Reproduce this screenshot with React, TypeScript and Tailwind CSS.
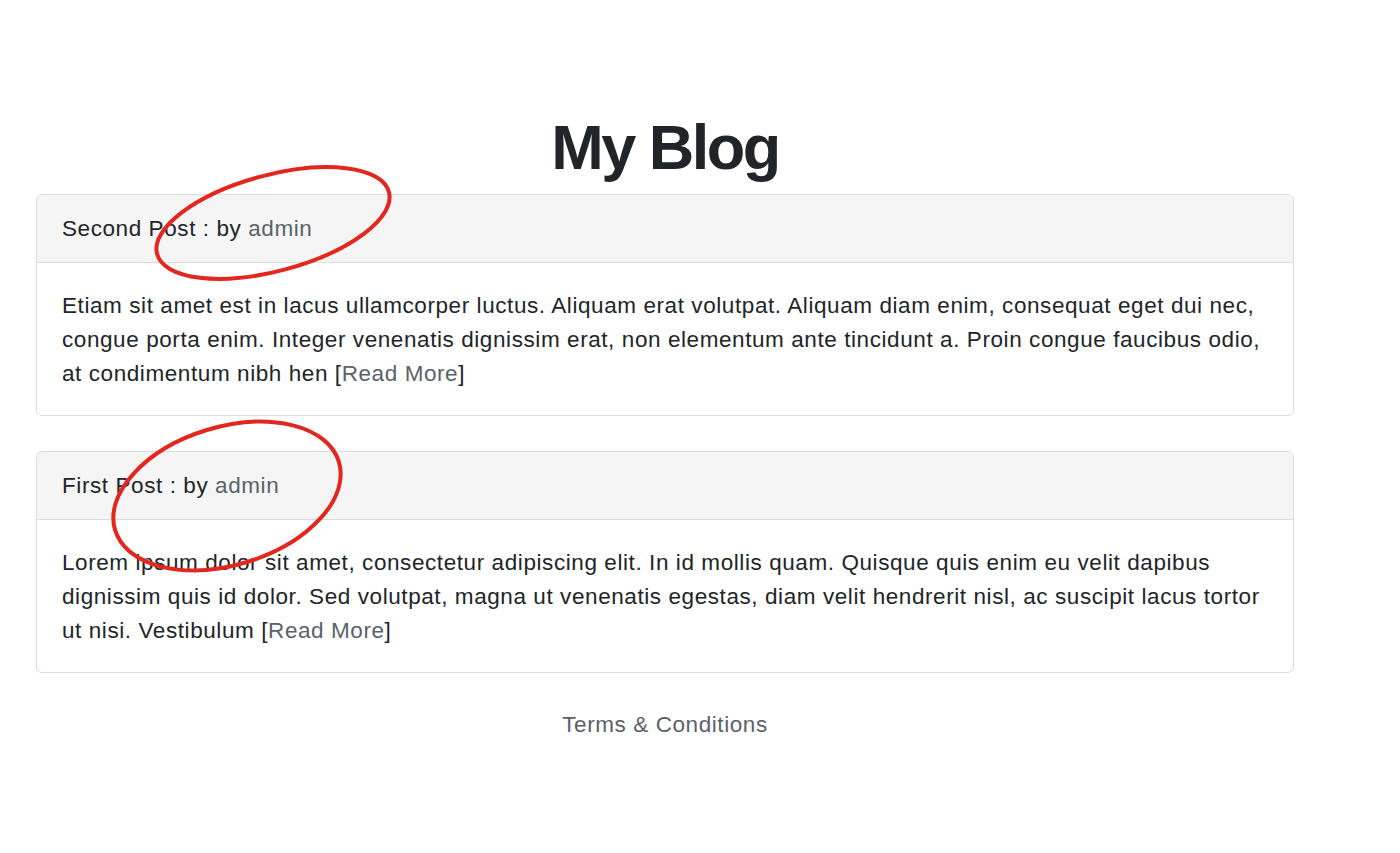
import React from "react";

const posts = [
  {
    title: "Second Post",
    lines: [
      "Etiam sit amet est in lacus ullamcorper luctus. Aliquam erat volutpat. Aliquam diam enim, consequat eget dui nec,",
      "congue porta enim. Integer venenatis dignissim erat, non elementum ante tincidunt a. Proin congue faucibus odio,",
      "at condimentum nibh hen ",
    ],
  },
  {
    title: "First Post",
    lines: [
      "Lorem ipsum dolor sit amet, consectetur adipiscing elit. In id mollis quam. Quisque quis enim eu velit dapibus",
      "dignissim quis id dolor. Sed volutpat, magna ut venenatis egestas, diam velit hendrerit nisl, ac suscipit lacus tortor",
      "ut nisi. Vestibulum ",
    ],
  },
];

function Card({ title, lines }: { title: string; lines: string[] }) {
  return (
    <div className="rounded-[6px] border border-[#dcdcdc] bg-white overflow-hidden">
      <div className="bg-[#f5f5f5] border-b border-[#dcdcdc] px-[25px] pt-[17px] pb-[16px] leading-[34px]">
        {title} : by <a className="text-[#59626b]">admin</a>
      </div>
      <div className="px-[25px] pt-[26px] pb-[24px] leading-[34px]">
        {lines.map((l, i) => (
          <div key={i} className="whitespace-nowrap">
            {l}
            {i === lines.length - 1 && (
              <>
                [<a className="text-[#59626b]">Read More</a>]
              </>
            )}
          </div>
        ))}
      </div>
    </div>
  );
}

export default function App() {
  return (
    <div
      className="relative min-h-[853px] w-[1400px] bg-white text-[#212529] text-[22.5px] tracking-[0.58px]"
      style={{ fontFamily: '"Liberation Sans", Arial, sans-serif' }}
    >
      <div className="ml-[36px] w-[1258px] pt-[108px]">
        <h1 className="text-center text-[63px] font-bold leading-[78px] mb-[8px] tracking-[-2.5px] text-[#212529]">
          My Blog
        </h1>
        <div className="flex flex-col gap-[35px]">
          {posts.map((p) => (
            <Card key={p.title} title={p.title} lines={p.lines} />
          ))}
        </div>
        <div className="mt-[35px] text-center leading-[34px] text-[#59626b]">
          Terms &amp; Conditions
        </div>
      </div>
      <svg
        className="absolute inset-0 pointer-events-none"
        width="1400"
        height="853"
        viewBox="0 0 1400 853"
      >
        <ellipse
          cx="273"
          cy="223"
          rx="120"
          ry="48"
          transform="rotate(-15 273 223)"
          fill="none"
          stroke="#e3261e"
          strokeWidth="4"
        />
        <ellipse
          cx="227"
          cy="496"
          rx="117"
          ry="69"
          transform="rotate(-17 227 496)"
          fill="none"
          stroke="#e3261e"
          strokeWidth="4"
        />
      </svg>
    </div>
  );
}
